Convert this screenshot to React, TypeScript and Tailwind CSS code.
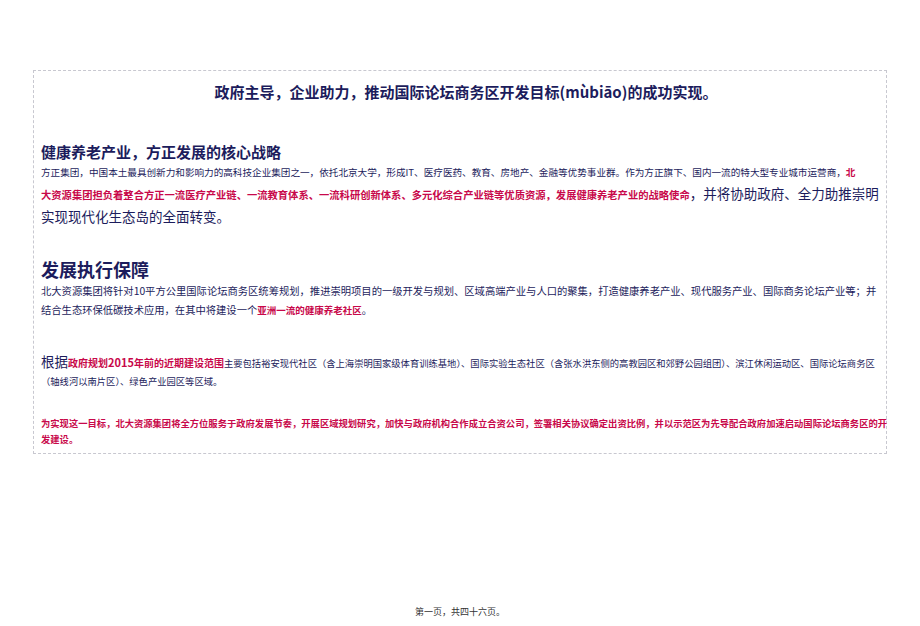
export default function App() {
  const f = { fontFamily: '"Noto Sans CJK SC","Noto Sans",sans-serif' };
  return (
    <div className="w-[920px] h-[626px] bg-white relative text-[#1c1c5c]" style={f}>
      <div className="pt-[70px] px-[33px]">
        <div className="h-[384px] border border-dashed border-[#c8c8d0] px-[7px]">
          <div className="mt-[10px] text-center font-bold text-[15px] leading-[22px] pl-[12px]">政府主导，企业助力，推动国际论坛商务区开发目标(mùbiāo)的成功实现。</div>
          <div className="mt-[38px] font-bold text-[15px] leading-[22px]">健康养老产业，方正发展的核心战略</div>
          <div className="text-[9.6px] leading-[18px] whitespace-nowrap">方正集团，中国本土最具创新力和影响力的高科技企业集团之一，依托北京大学，形成IT、医疗医药、教育、房地产、金融等优势事业群。作为方正旗下、国内一流的特大型专业城市运营商，<span className="text-[#c8084a] font-bold">北</span></div>
          <div className="leading-[22px] whitespace-nowrap"><span className="text-[#c8084a] font-bold text-[10.3px]">大资源集团担负着整合方正一流医疗产业链、一流教育体系、一流科研创新体系、多元化综合产业链等优质资源，发展健康养老产业的战略使命</span><span className="text-[13.5px]">，并将协助政府、全力助推崇明</span></div>
          <div className="text-[13.5px] leading-[20px]">实现现代化生态岛的全面转变。</div>
          <div className="mt-[31px] font-bold text-[18px] leading-[24px]">发展执行保障</div>
          <div className="text-[10.3px] leading-[19px] whitespace-nowrap">北大资源集团将针对10平方公里国际论坛商务区统筹规划，推进崇明项目的一级开发与规划、区域高端产业与人口的聚集，打造健康养老产业、现代服务产业、国际商务论坛产业等；并</div>
          <div className="text-[10.3px] leading-[19px]">结合生态环保低碳技术应用，在其中将建设一个<span className="text-[#c8084a] font-bold text-[9.5px]">亚洲一流的健康养老社区</span>。</div>
          <div className="mt-[30px] leading-[20px] whitespace-nowrap"><span className="text-[13.5px]">根据</span><span className="text-[#c8084a] font-bold text-[10px]">政府规划<span className="text-[11px]">2015</span>年前的近期建设范围</span><span className="text-[9.3px]">主要包括裕安现代社区（含上海崇明国家级体育训练基地）、国际实验生态社区（含张水洪东侧的高教园区和郊野公园组团）、滨江休闲运动区、国际论坛商务区</span></div>
          <div className="text-[9.3px] leading-[16px]">（轴线河以南片区）、绿色产业园区等区域。</div>
          <div className="mt-[25px] text-[#c8084a] font-bold text-[9.3px] leading-[18px] whitespace-nowrap">为实现这一目标，北大资源集团将全方位服务于政府发展节奏，开展区域规划研究，加快与政府机构合作成立合资公司，签署相关协议确定出资比例，并以示范区为先导配合政府加速启动国际论坛商务区的开</div>
          <div className="text-[#c8084a] font-bold text-[9.3px] leading-[14px]">发建设。</div>
        </div>
      </div>
      <div className="absolute left-0 right-0 top-[605px] text-center text-[9px] text-[#333]">第一页，共四十六页。</div>
    </div>
  );
}
